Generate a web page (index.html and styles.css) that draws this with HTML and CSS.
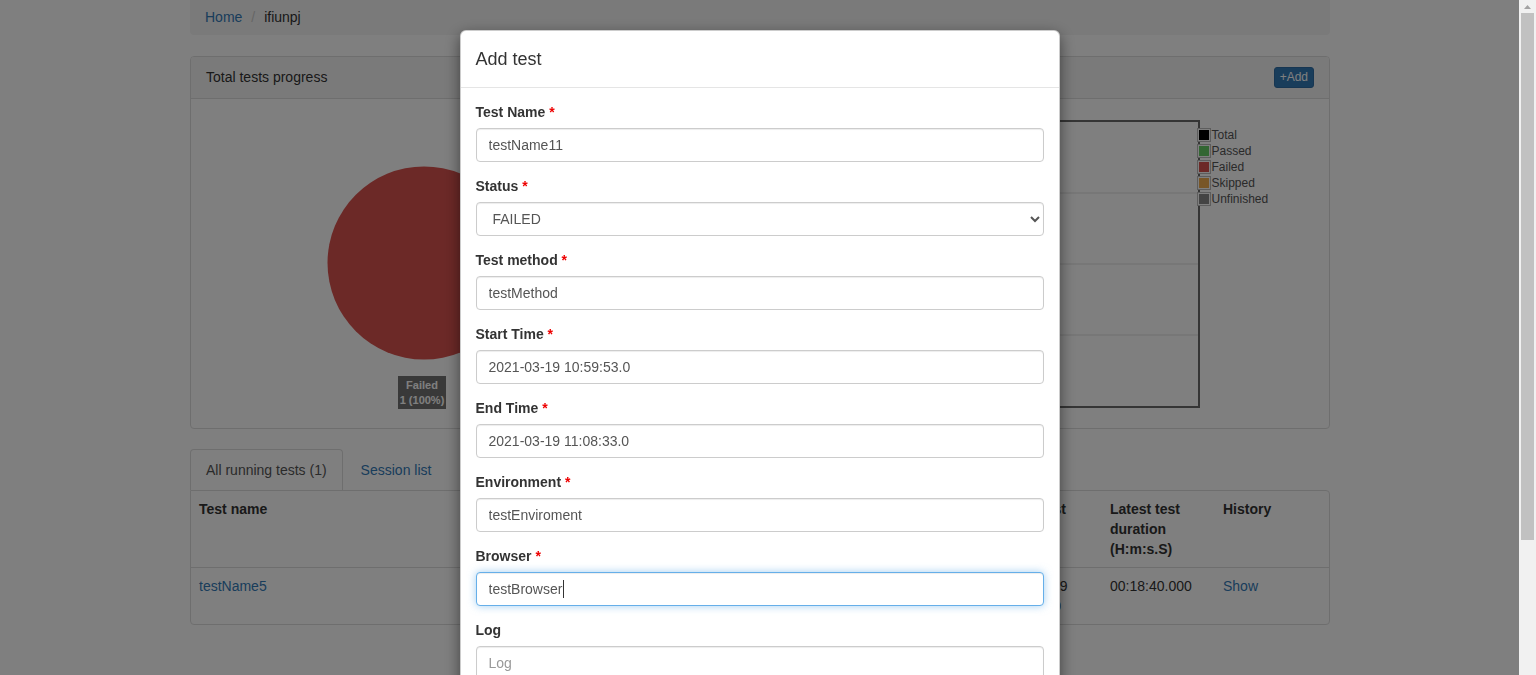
FILE: index.html
```html
<!DOCTYPE html>
<html lang="en">
<head>
<meta charset="utf-8">
<title>Add test</title>
<link rel="stylesheet" href="styles.css">
</head>
<body>
<div class="page">
  <div class="container">
    <ol class="breadcrumb">
      <li><a href="#">Home</a></li>
      <li class="active">ifiunpj</li>
    </ol>

    <div class="panel">
      <div class="panel-heading">
        <span class="panel-title">Total tests progress</span>
        <button class="btn-add" type="button">+Add</button>
      </div>
      <div class="panel-body charts">
        <svg class="chart" width="554" height="299" viewBox="0 0 554 299">
          <circle cx="218" cy="149" r="96.5" fill="#d9534f"/>
          <rect x="192" y="262" width="48" height="33" fill="rgba(0,0,0,0.55)"/>
          <text x="216" y="275" class="pie-label" text-anchor="middle">Failed</text>
          <text x="216" y="290" class="pie-label" text-anchor="middle">1 (100%)</text>
        </svg>
        <svg class="chart" width="554" height="299" viewBox="0 0 554 299">
          <line x1="40" y1="79" x2="439" y2="79" stroke="#dedede" stroke-width="1"/>
          <line x1="40" y1="150" x2="439" y2="150" stroke="#dedede" stroke-width="1"/>
          <line x1="40" y1="221" x2="439" y2="221" stroke="#dedede" stroke-width="1"/>
          <rect x="40" y="7" width="399" height="286" fill="none" stroke="#6a6a6a" stroke-width="2"/>
          <g class="legend">
            <rect x="437.5" y="14.5" width="13" height="13" fill="#fff" stroke="#bbb"/>
            <rect x="439" y="16" width="10" height="10" fill="#000"/>
            <text x="451.5" y="25">Total</text>
            <rect x="437.5" y="30.5" width="13" height="13" fill="#fff" stroke="#bbb"/>
            <rect x="439" y="32" width="10" height="10" fill="#6c6"/>
            <text x="451.5" y="41">Passed</text>
            <rect x="437.5" y="46.5" width="13" height="13" fill="#fff" stroke="#bbb"/>
            <rect x="439" y="48" width="10" height="10" fill="#d9534f"/>
            <text x="451.5" y="57">Failed</text>
            <rect x="437.5" y="62.5" width="13" height="13" fill="#fff" stroke="#bbb"/>
            <rect x="439" y="64" width="10" height="10" fill="#f0ad4e"/>
            <text x="451.5" y="73">Skipped</text>
            <rect x="437.5" y="78.5" width="13" height="13" fill="#fff" stroke="#bbb"/>
            <rect x="439" y="80" width="10" height="10" fill="#888"/>
            <text x="451.5" y="89">Unfinished</text>
          </g>
        </svg>
      </div>
    </div>

    <ul class="nav-tabs">
      <li class="tab active"><a href="#">All running tests (1)</a></li>
      <li class="tab"><a href="#">Session list</a></li>
    </ul>
    <div class="tab-panel">
      <table class="tests">
        <colgroup>
          <col class="c-name"><col class="c-status"><col class="c-env"><col class="c-browser">
          <col class="c-start"><col class="c-end"><col class="c-dur"><col class="c-hist">
        </colgroup>
        <thead>
          <tr>
            <th>Test name</th>
            <th>Status</th>
            <th>Environment</th>
            <th>Browser</th>
            <th>Latest test start time</th>
            <th>Latest test end time</th>
            <th>Latest test duration (H:m:s.S)</th>
            <th>History</th>
          </tr>
        </thead>
        <tbody>
          <tr>
            <td><a href="#">testName5</a></td>
            <td>FAILED</td>
            <td>testEnviroment</td>
            <td>testBrowser</td>
            <td>2021-03-19 10:59:53.0</td>
            <td>2021-03-19 11:08:33.0</td>
            <td>00:18:40.000</td>
            <td><a href="#">Show</a></td>
          </tr>
        </tbody>
      </table>
    </div>
  </div>
</div>

<div class="backdrop"></div>

<div class="modal">
  <div class="modal-scroll">
    <div class="modal-dialog">
      <div class="modal-header">
        <h4 class="modal-title">Add test</h4>
      </div>
      <form class="modal-body">
        <div class="form-group">
          <label>Test Name <span class="req">*</span></label>
          <input class="form-control" type="text" value="testName11">
        </div>
        <div class="form-group">
          <label>Status <span class="req">*</span></label>
          <select class="form-control">
            <option>FAILED</option>
            <option>PASSED</option>
            <option>SKIPPED</option>
          </select>
        </div>
        <div class="form-group">
          <label>Test method <span class="req">*</span></label>
          <input class="form-control" type="text" value="testMethod">
        </div>
        <div class="form-group">
          <label>Start Time <span class="req">*</span></label>
          <input class="form-control" type="text" value="2021-03-19 10:59:53.0">
        </div>
        <div class="form-group">
          <label>End Time <span class="req">*</span></label>
          <input class="form-control" type="text" value="2021-03-19 11:08:33.0">
        </div>
        <div class="form-group">
          <label>Environment <span class="req">*</span></label>
          <input class="form-control" type="text" value="testEnviroment">
        </div>
        <div class="form-group">
          <label>Browser <span class="req">*</span></label>
          <div class="input-wrap">
            <input class="form-control focused" type="text" value="testBrowser">
            <span class="caret"></span>
          </div>
        </div>
        <div class="form-group">
          <label>Log</label>
          <input class="form-control" type="text" placeholder="Log">
        </div>
      </form>
    </div>
  </div>
  <div class="scrollbar">
    <div class="sb-arrow">
      <svg width="7" height="4" viewBox="0 0 7 4"><polygon points="0,4 3.5,0 7,4" fill="#a3a3a3"/></svg>
    </div>
    <div class="sb-thumb"></div>
  </div>
</div>
</body>
</html>
```

FILE: styles.css
```css
html, body {
  margin: 0;
  height: 100%;
  overflow: hidden;
}
body {
  font-family: "Liberation Sans", Arial, sans-serif;
  font-size: 14px;
  line-height: 1.42857;
  color: #333;
  background: #fff;
}
a {
  color: #337ab7;
  text-decoration: none;
}

.page {
  padding-right: 16px;
}
.container {
  width: 1140px;
  margin: 0 auto;
}

/* breadcrumb */
.breadcrumb {
  display: flex;
  list-style: none;
  margin: 0 0 21px;
  padding: 8px 15px 7px;
  background: #f5f5f5;
  border-radius: 0 0 4px 4px;
}
.breadcrumb li + li::before {
  content: "/\00a0";
  padding: 0 5px;
  margin-left: 4px;
  color: #ccc;
}
.breadcrumb .active {
  color: #333;
}

/* panel */
.panel {
  border: 1px solid #ddd;
  border-radius: 4px;
  background: #fff;
  margin-bottom: 20px;
}
.panel-heading {
  display: flex;
  align-items: center;
  justify-content: space-between;
  padding: 10px 15px;
  background: #f5f5f5;
  border-bottom: 1px solid #ddd;
  border-radius: 3px 3px 0 0;
}
.panel-title {
  line-height: 20px;
}
.btn-add {
  font-family: "Liberation Sans", Arial, sans-serif;
  font-size: 12px;
  line-height: 17px;
  padding: 1px 5px;
  border: 1px solid #2e6da4;
  border-radius: 3px;
  background: #337ab7;
  color: #fff;
}
.panel-body {
  padding: 15px;
}
.charts {
  display: flex;
}
.chart {
  display: block;
}
.pie-label {
  font-family: "Liberation Sans", Arial, sans-serif;
  font-size: 11px;
  font-weight: bold;
  fill: #fff;
}
.legend text {
  font-family: "Liberation Sans", Arial, sans-serif;
  font-size: 12px;
  fill: #545454;
}

/* tabs */
.nav-tabs {
  display: flex;
  list-style: none;
  margin: 0;
  padding: 0;
}
.tab {
  margin-right: 2px;
}
.tab a {
  display: block;
  padding: 10px 15px;
  line-height: 20px;
  border: 1px solid transparent;
  border-bottom: 0;
  border-radius: 4px 4px 0 0;
}
.tab.active a {
  color: #555;
  background: #fff;
  border-color: #ddd;
}
.tab-panel {
  border: 1px solid #ddd;
  border-radius: 0 4px 4px 4px;
}
.tests {
  width: 100%;
  border-collapse: collapse;
  table-layout: fixed;
}
.c-name { width: 270px; }
.c-status { width: 100px; }
.c-env { width: 140px; }
.c-browser { width: 140px; }
.c-start { width: 147px; }
.c-end { width: 114px; }
.c-dur { width: 113px; }
.c-hist { width: 114px; }
.tests th,
.tests td {
  padding: 8px;
  text-align: left;
  vertical-align: top;
  line-height: 20px;
}
.tests th {
  font-weight: bold;
  border-bottom: 1px solid #ddd;
}

/* backdrop + modal */
.backdrop {
  position: fixed;
  inset: 0;
  background: rgba(0, 0, 0, 0.5);
}
.modal {
  position: fixed;
  inset: 0;
  display: flex;
}
.modal-scroll {
  flex: 1;
  overflow: hidden;
}
.modal-dialog {
  width: 598px;
  margin: 30px auto;
  background: #fff;
  border: 1px solid rgba(0, 0, 0, 0.2);
  border-radius: 6px;
  box-shadow: 0 5px 15px rgba(0, 0, 0, 0.5);
}
.modal-header {
  padding: 16px 15px 14px;
  border-bottom: 1px solid #e5e5e5;
}
.modal-title {
  margin: 0;
  font-size: 18px;
  font-weight: 500;
  line-height: 1.42857;
  color: #333;
}
.modal-body {
  display: block;
  padding: 14px 15px 15px;
}
.form-group {
  margin-bottom: 14px;
}
.form-group label {
  display: block;
  font-weight: bold;
  margin-bottom: 6px;
  line-height: 20px;
}
.req {
  color: #e00;
}
.form-control {
  display: block;
  box-sizing: border-box;
  width: 100%;
  height: 34px;
  padding: 6px 12px;
  font-family: "Liberation Sans", Arial, sans-serif;
  font-size: 14px;
  line-height: 1.42857;
  color: #555;
  background: #fff;
  border: 1px solid #ccc;
  border-radius: 4px;
  box-shadow: inset 0 1px 1px rgba(0, 0, 0, 0.075);
  outline: none;
}
.form-control::placeholder {
  color: #999;
}
.form-control.focused {
  border-color: #66afe9;
  box-shadow: inset 0 1px 1px rgba(0, 0, 0, 0.075), 0 0 8px rgba(102, 175, 233, 0.6);
}
.input-wrap {
  position: relative;
}
.caret {
  position: absolute;
  left: 87px;
  top: 8px;
  width: 1px;
  height: 18px;
  background: #333;
}

/* scrollbar */
.scrollbar {
  width: 17px;
  background: #f1f1f1;
  display: flex;
  flex-direction: column;
  align-items: center;
}
.sb-arrow {
  height: 13px;
  display: flex;
  align-items: center;
  justify-content: center;
}
.sb-arrow svg {
  display: block;
}
.sb-thumb {
  width: 13px;
  height: 527px;
  background: #c1c1c1;
}
```
